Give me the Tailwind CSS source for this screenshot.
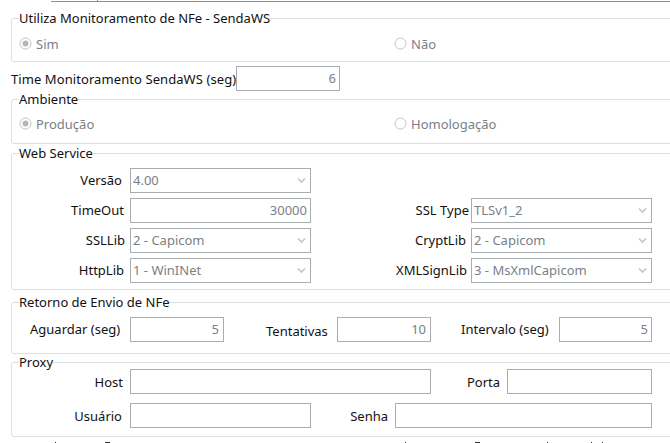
<!DOCTYPE html>
<html><head><meta charset="utf-8"><script src="https://cdn.jsdelivr.net/npm/@tailwindcss/browser@4"></script></head>
<body class="bg-white">
<div class="relative w-[670px] h-[443px] overflow-hidden bg-white font-['Noto_Sans',sans-serif] text-[13px] leading-[16px] text-[#111] whitespace-nowrap">
  <div class="ml-[51px] h-[2px] border-b border-[#8f8f8f] flex"><div class="w-[47px] h-[2px] border-r border-[#8f8f8f]"></div></div>

  <section class="relative mt-[16px] ml-[11px] w-[680px] h-[44px] border border-[#d8dfe6] rounded-[3px] flex items-center text-[#7a7f87] pt-[7px]">
    <span class="absolute left-[7px] -top-[9px] bg-white text-[#111]">Utiliza Monitoramento de NFe - SendaWS</span>
    <div class="flex items-center gap-[4px] ml-[7px] w-[375px]"><svg width="13" height="13" viewBox="0 0 13 13"><circle cx="6.5" cy="6.5" r="5.5" fill="#fff" stroke="#bfc3c7"/><circle cx="6.5" cy="6.5" r="3" fill="#b5b8bb"/></svg><span>Sim</span></div>
    <div class="flex items-center gap-[4px]"><svg width="13" height="13" viewBox="0 0 13 13"><circle cx="6.5" cy="6.5" r="5.5" fill="#fff" stroke="#bfc3c7"/></svg><span>Não</span></div>
  </section>

  <div class="mt-[4px] ml-[11px] h-[25px] flex items-center">
    <span class="w-[225px] tracking-[0.08px]">Time Monitoramento SendaWS (seg)</span>
    <div class="w-[104px] h-[25px] border border-[#a9adb0] text-right pr-[3px] pt-[3px] text-[#7a7f87]">6</div>
  </div>

  <section class="relative mt-[8px] ml-[11px] w-[680px] h-[45px] border border-[#d8dfe6] rounded-[3px] flex items-center text-[#7a7f87] pt-[4px]">
    <span class="absolute left-[7px] -top-[9px] bg-white text-[#111]">Ambiente</span>
    <div class="flex items-center gap-[4px] ml-[7px] w-[375px]"><svg width="13" height="13" viewBox="0 0 13 13"><circle cx="6.5" cy="6.5" r="5.5" fill="#fff" stroke="#bfc3c7"/><circle cx="6.5" cy="6.5" r="3" fill="#b5b8bb"/></svg><span>Produção</span></div>
    <div class="flex items-center gap-[4px]"><svg width="13" height="13" viewBox="0 0 13 13"><circle cx="6.5" cy="6.5" r="5.5" fill="#fff" stroke="#bfc3c7"/></svg><span>Homologação</span></div>
  </section>

  <section class="relative mt-[9px] ml-[11px] w-[680px] h-[137px] border border-[#d8dfe6] rounded-[3px] pt-[14px] flex flex-col gap-[5px]">
    <span class="absolute left-[7px] -top-[9px] bg-white">Web Service</span>
    <div class="h-[25px] flex items-center">
      <span class="w-[118px] pr-[8px] pb-[1px] text-right">Versão</span>
      <div class="relative w-[181px] h-[25px] border border-[#a9adb0] pl-[2px] pt-[3px] text-[#7a7f87]">4.00<svg class="absolute right-[4px] top-[8px]" width="9" height="7" viewBox="0 0 9 7"><path d="M1 1.5l3.5 3.5 3.5-3.5" fill="none" stroke="#c3c6c9" stroke-width="1.6"/></svg></div>
    </div>
    <div class="h-[25px] flex items-center">
      <span class="w-[118px] pr-[6px] pb-[1px] text-right">TimeOut</span>
      <div class="w-[181px] h-[25px] border border-[#a9adb0] text-right pr-[3px] pt-[3px] text-[#7a7f87]">30000</div>
      <span class="w-[160px] pr-[2px] pb-[1px] text-right">SSL Type</span>
      <div class="relative w-[181px] h-[25px] border border-[#a9adb0] pl-[2px] pt-[3px] text-[#7a7f87]">TLSv1_2<svg class="absolute right-[4px] top-[8px]" width="9" height="7" viewBox="0 0 9 7"><path d="M1 1.5l3.5 3.5 3.5-3.5" fill="none" stroke="#c3c6c9" stroke-width="1.6"/></svg></div>
    </div>
    <div class="h-[25px] flex items-center">
      <span class="w-[118px] pr-[5px] pb-[1px] text-right">SSLLib</span>
      <div class="relative w-[181px] h-[25px] border border-[#a9adb0] pl-[2px] pt-[3px] text-[#7a7f87]">2 - Capicom<svg class="absolute right-[4px] top-[8px]" width="9" height="7" viewBox="0 0 9 7"><path d="M1 1.5l3.5 3.5 3.5-3.5" fill="none" stroke="#c3c6c9" stroke-width="1.6"/></svg></div>
      <span class="w-[160px] pr-[5px] pb-[1px] text-right">CryptLib</span>
      <div class="relative w-[181px] h-[25px] border border-[#a9adb0] pl-[2px] pt-[3px] text-[#7a7f87]">2 - Capicom<svg class="absolute right-[4px] top-[8px]" width="9" height="7" viewBox="0 0 9 7"><path d="M1 1.5l3.5 3.5 3.5-3.5" fill="none" stroke="#c3c6c9" stroke-width="1.6"/></svg></div>
    </div>
    <div class="h-[25px] flex items-center">
      <span class="w-[118px] pr-[6px] pb-[1px] text-right">HttpLib</span>
      <div class="relative w-[181px] h-[25px] border border-[#a9adb0] pl-[2px] pt-[3px] text-[#7a7f87]">1 - WinINet<svg class="absolute right-[4px] top-[8px]" width="9" height="7" viewBox="0 0 9 7"><path d="M1 1.5l3.5 3.5 3.5-3.5" fill="none" stroke="#c3c6c9" stroke-width="1.6"/></svg></div>
      <span class="w-[160px] pr-[4px] pb-[1px] text-right">XMLSignLib</span>
      <div class="relative w-[181px] h-[25px] border border-[#a9adb0] pl-[2px] pt-[3px] text-[#7a7f87]">3 - MsXmlCapicom<svg class="absolute right-[4px] top-[8px]" width="9" height="7" viewBox="0 0 9 7"><path d="M1 1.5l3.5 3.5 3.5-3.5" fill="none" stroke="#c3c6c9" stroke-width="1.6"/></svg></div>
    </div>
  </section>

  <section class="relative mt-[12px] ml-[11px] w-[680px] h-[52px] border border-[#d8dfe6] rounded-[3px] pt-[14px]">
    <span class="absolute left-[7px] -top-[9px] bg-white">Retorno de Envio de NFe</span>
    <div class="h-[25px] flex items-center">
      <span class="w-[118px] pl-[18px] pb-[1px]">Aguardar (seg)</span>
      <div class="w-[94px] h-[25px] border border-[#a9adb0] text-right pr-[4px] pt-[3px] text-[#7a7f87]">5</div>
      <span class="w-[113px] pl-[42px] pt-[2px]">Tentativas</span>
      <div class="w-[94px] h-[25px] border border-[#a9adb0] text-right pr-[4px] pt-[3px] text-[#7a7f87]">10</div>
      <span class="w-[128px] pl-[30px] pb-[1px]">Intervalo (seg)</span>
      <div class="w-[93px] h-[25px] border border-[#a9adb0] text-right pr-[3px] pt-[3px] text-[#7a7f87]">5</div>
    </div>
  </section>

  <section class="relative mt-[8px] ml-[11px] w-[680px] h-[75px] border border-[#d8dfe6] rounded-[3px] pt-[6px] flex flex-col gap-[9px]">
    <span class="absolute left-[7px] -top-[9px] bg-white">Proxy</span>
    <div class="h-[25px] flex items-center">
      <span class="w-[118px] pr-[7px] text-right pt-[1px]">Host</span>
      <div class="w-[301px] h-[25px] border border-[#a9adb0]"></div>
      <span class="w-[76px] pr-[7px] text-right pt-[1px]">Porta</span>
      <div class="w-[145px] h-[25px] border border-[#a9adb0]"></div>
    </div>
    <div class="h-[25px] flex items-center">
      <span class="w-[118px] pr-[8px] text-right pt-[1px]">Usuário</span>
      <div class="w-[181px] h-[25px] border border-[#a9adb0]"></div>
      <span class="w-[84px] pr-[7px] text-right pt-[1px]">Senha</span>
      <div class="w-[257px] h-[25px] border border-[#a9adb0]"></div>
    </div>
  </section>

  <svg class="absolute left-0 top-[441px]" width="670" height="2" viewBox="0 0 670 2"><g fill="#333"><rect x="55" y="1" width="1" height="1"/><rect x="105" y="1" width="5" height="1"/><rect x="405" y="1" width="1" height="1"/><rect x="475" y="1" width="5" height="1"/><rect x="547" y="1" width="1" height="1"/><rect x="591" y="1" width="1" height="1"/><rect x="602" y="1" width="1" height="1"/></g></svg>
</div>
</body></html>
